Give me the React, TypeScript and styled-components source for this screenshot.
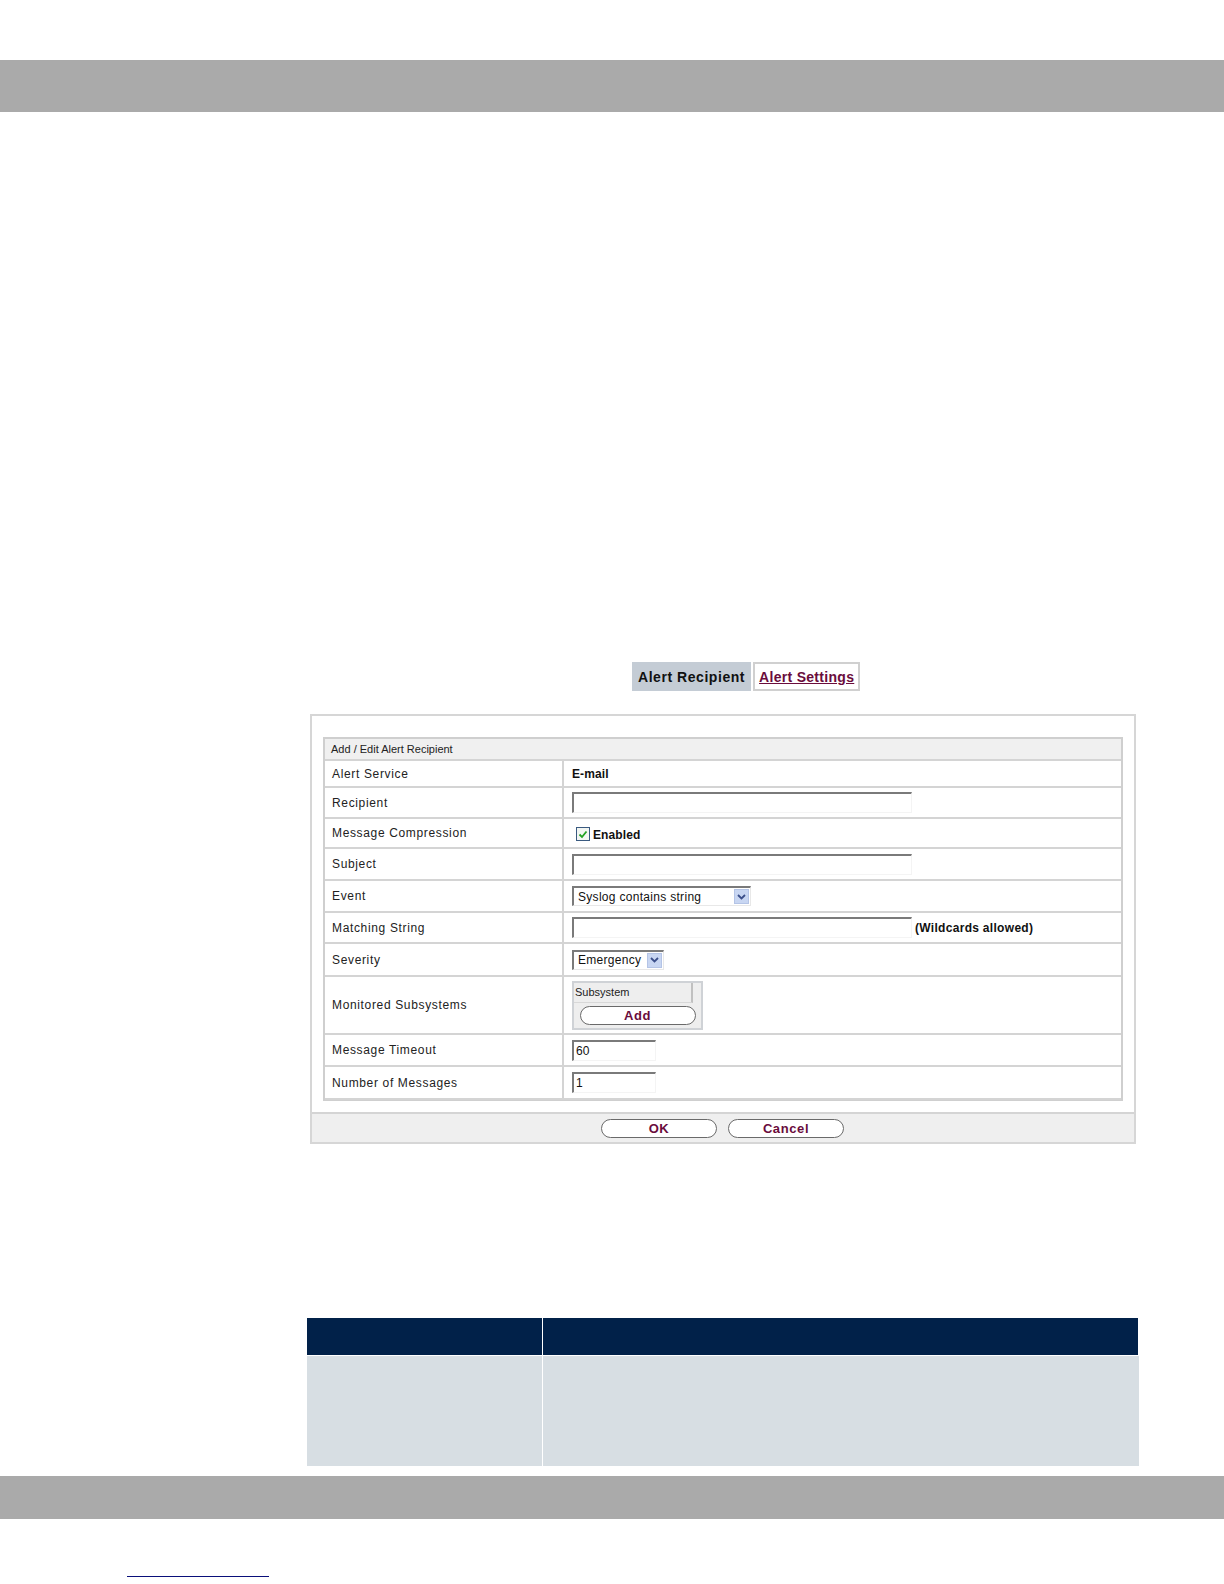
import styled, { createGlobalStyle } from 'styled-components';

const GlobalStyle = createGlobalStyle`
  html, body {
    margin: 0;
    padding: 0;
    background: #ffffff;
  }
  body {
    font-family: "Liberation Sans", Arial, sans-serif;
  }
`;

const Page = styled.div`
  width: 1224px;
  height: 1584px;
  display: flex;
  flex-direction: column;
  overflow: hidden;
`;

const GrayBar = styled.div<{ $top: number }>`
  margin-top: ${(p) => p.$top}px;
  height: 43px;
  background: #aaaaaa;
  flex-shrink: 0;
`;

const TopBar = styled(GrayBar)`
  height: 52px;
`;

const Content = styled.div`
  margin-left: 310px;
  width: 826px;
  display: flex;
  flex-direction: column;
`;

const Tabs = styled.div`
  margin-top: 550px;
  margin-left: 322px;
  display: flex;
  gap: 2px;
  height: 29px;
`;

const Tab = styled.div<{ $active?: boolean }>`
  display: flex;
  align-items: center;
  font-size: 14px;
  font-weight: bold;
  box-sizing: border-box;
  ${(p) =>
    p.$active
      ? `background: #c4ccd5; color: #111; padding: 0 6px; letter-spacing: 0.55px;`
      : `border: 2px solid #d0d0d0; color: #6a0c3c; text-decoration: underline; padding: 0 4px; letter-spacing: 0.3px;`}
`;

const Panel = styled.div`
  margin-top: 23px;
  border: 2px solid #d6d6d6;
  display: flex;
  flex-direction: column;
`;

const FormArea = styled.div`
  padding: 21px 11px 11px 11px;
`;

const FormTable = styled.div`
  border: 2px solid #cfcfcf;
  border-bottom-width: 1px;
`;

const HeadRow = styled.div`
  height: 20px;
  background: #f0f0f0;
  border-bottom: 2px solid #d4d4d4;
  display: flex;
  align-items: center;
  padding-left: 6px;
  font-size: 11px;
  color: #222;
`;

const Row = styled.div<{ $h: number }>`
  height: ${(p) => p.$h}px;
  display: grid;
  grid-template-columns: 239px 1fr;
  border-bottom: 2px solid #d4d4d4;
  box-sizing: border-box;
`;

const Label = styled.div`
  display: flex;
  align-items: center;
  padding-left: 7px;
  font-size: 12px;
  letter-spacing: 0.65px;
  color: #222;
  border-right: 2px solid #d4d4d4;
`;

const Value = styled.div`
  display: flex;
  align-items: center;
  padding-left: 8px;
  font-size: 12px;
  color: #111;
  gap: 3px;
`;

const BoldText = styled.span`
  font-weight: bold;
  font-size: 12px;
  letter-spacing: 0.1px;
`;

const HintText = styled(BoldText)`
  letter-spacing: 0.3px;
`;

const TextInput = styled.div<{ $w: number }>`
  width: ${(p) => p.$w}px;
  height: 21px;
  box-sizing: border-box;
  border-top: 2px solid #7a7a7a;
  border-left: 2px solid #7a7a7a;
  border-right: 1px solid #f4f4f4;
  border-bottom: 1px solid #f4f4f4;
  background: #fff;
  font-size: 12px;
  display: flex;
  align-items: center;
  padding-left: 2px;
  color: #111;
`;

const Select = styled.div<{ $w: number }>`
  width: ${(p) => p.$w}px;
  height: 20px;
  box-sizing: border-box;
  border-top: 2px solid #7a7a7a;
  border-left: 2px solid #7a7a7a;
  border-right: 1px solid #e8e8e8;
  border-bottom: 1px solid #e8e8e8;
  display: flex;
  align-items: center;
  justify-content: space-between;
  padding-left: 4px;
  padding-right: 1px;
  font-size: 12px;
  letter-spacing: 0.3px;
  color: #111;
`;

const SelectArrow = styled.div`
  width: 15px;
  height: 15px;
  background: #c8d6f2;
  border: 1px solid #b4c4e6;
  box-sizing: border-box;
  display: flex;
  align-items: center;
  justify-content: center;
`;

const CheckBox = styled.div`
  width: 12px;
  height: 12px;
  margin-left: 4px;
  margin-top: 2px;
  border: 1px solid #3a5a80;
  background: #f2f6f2;
  display: flex;
  align-items: center;
  justify-content: center;
`;

const CheckLabel = styled(BoldText)`
  margin-top: 3px;
`;

const SubBox = styled.div`
  width: 127px;
  border: 2px solid #cfd2d6;
  background: #eeeeee;
  display: flex;
  flex-direction: column;
`;

const SubHead = styled.div`
  height: 19px;
  display: flex;
  align-items: center;
  padding-left: 1px;
  font-size: 11px;
  color: #222;
  border-bottom: 1px solid #d8d8d8;
  margin-right: 8px;
  border-right: 2px solid #c0c0c0;
`;

const SubBody = styled.div`
  display: flex;
  justify-content: center;
  padding: 3px 0 3px;
`;

const PillButton = styled.div<{ $w: number }>`
  width: ${(p) => p.$w}px;
  height: 19px;
  box-sizing: border-box;
  border: 1px solid #6a6a6a;
  border-radius: 10px;
  background: #ffffff;
  color: #6a0c3c;
  font-weight: bold;
  font-size: 13px;
  letter-spacing: 0.6px;
  display: flex;
  align-items: center;
  justify-content: center;
`;

const Footer = styled.div`
  height: 28px;
  background: #efefef;
  border-top: 2px solid #d4d4d4;
  display: flex;
  justify-content: center;
  align-items: center;
  gap: 11px;
  padding-right: 1px;
`;

const InfoTable = styled.div`
  margin-top: 174px;
  margin-left: -3px;
  width: 832px;
  display: grid;
  grid-template-columns: 236px 1fr;
`;

const InfoHead = styled.div`
  height: 37px;
  background: #012149;
  border-right: 1px solid #ffffff;
  border-bottom: 1px solid #ffffff;
  &:last-child {
    border-right: none;
  }
`;

const InfoCell = styled.div`
  height: 110px;
  background: #d7dee3;
  border-right: 1px solid #ffffff;
  &:last-child {
    border-right: none;
  }
`;

const BottomBar = styled(GrayBar)``;

const FootLink = styled.div`
  margin-top: 57px;
  margin-left: 127px;
  width: 142px;
  height: 1px;
  background: #0a0f7a;
`;

const rows: { label: string; h: number; kind: string }[] = [
  { label: 'Alert Service', h: 27, kind: 'service' },
  { label: 'Recipient', h: 31, kind: 'recipient' },
  { label: 'Message Compression', h: 30, kind: 'compression' },
  { label: 'Subject', h: 32, kind: 'subject' },
  { label: 'Event', h: 32, kind: 'event' },
  { label: 'Matching String', h: 31, kind: 'matching' },
  { label: 'Severity', h: 33, kind: 'severity' },
  { label: 'Monitored Subsystems', h: 58, kind: 'subsystems' },
  { label: 'Message Timeout', h: 32, kind: 'timeout' },
  { label: 'Number of Messages', h: 33, kind: 'number' },
];

function Chevron() {
  return (
    <svg width="9" height="6" viewBox="0 0 9 6">
      <path d="M1 1 L4.5 4.5 L8 1" fill="none" stroke="#3b4f8a" strokeWidth="1.8" />
    </svg>
  );
}

function renderValue(kind: string) {
  switch (kind) {
    case 'service':
      return <BoldText>E-mail</BoldText>;
    case 'recipient':
    case 'subject':
      return <TextInput $w={340} />;
    case 'compression':
      return (
        <>
          <CheckBox>
            <svg width="10" height="9" viewBox="0 0 10 9">
              <path d="M1.5 4.5 L4 7 L8.5 1.5" fill="none" stroke="#21a121" strokeWidth="1.8" />
            </svg>
          </CheckBox>
          <CheckLabel>Enabled</CheckLabel>
        </>
      );
    case 'event':
      return (
        <Select $w={179}>
          <span>Syslog contains string</span>
          <SelectArrow>
            <Chevron />
          </SelectArrow>
        </Select>
      );
    case 'matching':
      return (
        <>
          <TextInput $w={340} />
          <HintText>(Wildcards allowed)</HintText>
        </>
      );
    case 'severity':
      return (
        <Select $w={92}>
          <span>Emergency</span>
          <SelectArrow>
            <Chevron />
          </SelectArrow>
        </Select>
      );
    case 'subsystems':
      return (
        <SubBox>
          <SubHead>Subsystem</SubHead>
          <SubBody>
            <PillButton $w={116}>Add</PillButton>
          </SubBody>
        </SubBox>
      );
    case 'timeout':
      return <TextInput $w={84}>60</TextInput>;
    case 'number':
      return <TextInput $w={84}>1</TextInput>;
    default:
      return null;
  }
}

export default function App() {
  return (
    <Page>
      <GlobalStyle />
      <TopBar $top={60} />
      <Content>
        <Tabs>
          <Tab $active>Alert Recipient</Tab>
          <Tab>Alert Settings</Tab>
        </Tabs>
        <Panel>
          <FormArea>
            <FormTable>
              <HeadRow>Add / Edit Alert Recipient</HeadRow>
              {rows.map((r) => (
                <Row key={r.label} $h={r.h}>
                  <Label>{r.label}</Label>
                  <Value>{renderValue(r.kind)}</Value>
                </Row>
              ))}
            </FormTable>
          </FormArea>
          <Footer>
            <PillButton $w={116}>OK</PillButton>
            <PillButton $w={116}>Cancel</PillButton>
          </Footer>
        </Panel>
        <InfoTable>
          <InfoHead />
          <InfoHead />
          <InfoCell />
          <InfoCell />
        </InfoTable>
      </Content>
      <BottomBar $top={10} />
      <FootLink />
    </Page>
  );
}
